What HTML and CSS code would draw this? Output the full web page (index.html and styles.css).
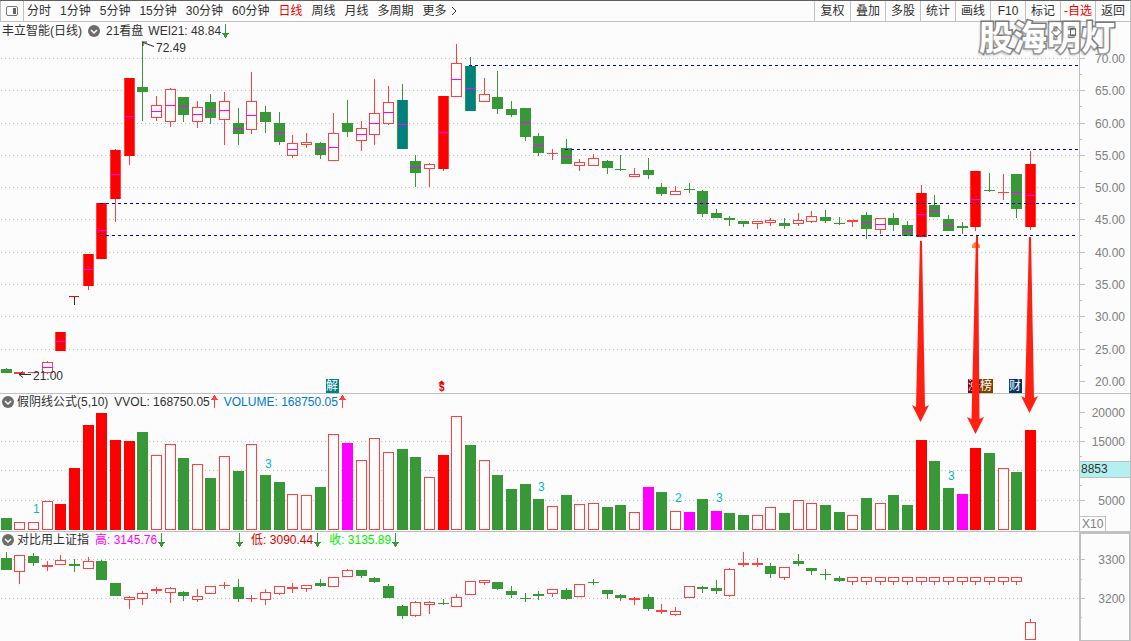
FILE: index.html
```html
<!DOCTYPE html>
<html lang="zh-CN">
<head>
<meta charset="utf-8">
<title>丰立智能 日线</title>
<link rel="stylesheet" href="styles.css">
</head>
<body>
<svg class="defs" width="0" height="0" aria-hidden="true">
  <symbol id="down" viewBox="0 0 7 14"><path d="M3 0h1v9h3v1h-1v1h-1v2h-1v1h-1v-1h-1v-2h-1v-1h-1v-1h3z" fill="#389838"/></symbol>
  <symbol id="up" viewBox="0 0 7 14"><path d="M3 0h1v1h1v2h1v1h1v1h-3v8h-1v-8h-3v-1h1v-1h1v-2h1z" fill="#ff4040"/></symbol>
  <symbol id="fold" viewBox="0 0 14 14"><circle cx="7" cy="7" r="6" fill="#6c6c6c"/><path d="M4 6l3 3 3-3" fill="none" stroke="#fff" stroke-width="1.5"/></symbol>
</svg>
<main class="app">
  <nav class="toolbar">
    <button class="dock" aria-label="侧栏"><svg width="14" height="12" viewBox="0 0 14 12"><rect x="1.500" y="1.500" width="11" height="9" rx="1.500" fill="none" stroke="#777" /><rect x="8" y="3" width="3" height="6" fill="#666"/></svg></button>
    <div class="periods">
      <button>分时</button><button>1分钟</button><button>5分钟</button><button>15分钟</button><button>30分钟</button><button>60分钟</button><button class="active">日线</button><button>周线</button><button>月线</button><button>多周期</button><button class="more">更多<svg width="6" height="10" viewBox="0 0 6 10"><path d="M1 1l4 4-4 4" fill="none" stroke="#333"/></svg></button>
    </div>
    <div class="tools">
      <button>复权</button><button>叠加</button><button>多股</button><button>统计</button><button>画线</button><button>F10</button><button>标记</button><button class="active">-自选</button><button>返回</button>
    </div>
  </nav>
  <section class="panel price">
    <div class="caption">
      <span>丰立智能(日线)</span>
      <button class="fold" aria-label="折叠"><svg width="14" height="14"><use href="#fold"/></svg></button>
      <span>21看盘</span>
      <span class="field">WEI21: 48.84<svg width="7" height="14"><use href="#down"/></svg></span>
    </div>
    <svg class="plot" id="price" viewBox="0 22 1079 371" preserveAspectRatio="xMinYMin meet"></svg>
    <svg class="axis" id="priceAxis" viewBox="1079 22 52 371"></svg>
  </section>
  <section class="panel volume">
    <div class="caption">
      <button class="fold" aria-label="折叠"><svg width="14" height="14"><use href="#fold"/></svg></button>
      <span>假阴线公式(5,10)</span>
      <span class="field">VVOL: 168750.05<svg width="7" height="14"><use href="#up"/></svg></span>
      <span class="field blue">VOLUME: 168750.05<svg width="7" height="14"><use href="#up"/></svg></span>
    </div>
    <svg class="plot" id="volume" viewBox="0 394 1079 137" preserveAspectRatio="xMinYMin meet"></svg>
    <svg class="axis" id="volumeAxis" viewBox="1079 394 52 137"></svg>
  </section>
  <section class="panel index">
    <div class="caption">
      <button class="fold" aria-label="折叠"><svg width="14" height="14"><use href="#fold"/></svg></button>
      <span>对比用上证指</span>
      <span class="field magenta">高: 3145.76<svg width="7" height="14"><use href="#down"/></svg></span>
      <span class="field white">开: 3091.94<svg width="7" height="14"><use href="#down"/></svg></span>
      <span class="field red">低: 3090.44<svg width="7" height="14"><use href="#down"/></svg></span>
      <span class="field green">收: 3135.89<svg width="7" height="14"><use href="#down"/></svg></span>
    </div>
    <svg class="plot" id="index" viewBox="0 532 1079 109" preserveAspectRatio="xMinYMin meet"></svg>
    <svg class="axis" id="indexAxis" viewBox="1079 532 52 109"></svg>
  </section>
  <svg class="arrows" viewBox="0 22 1079 419" preserveAspectRatio="xMinYMin meet" aria-hidden="true">
    <g fill="#ff2012">
      <path d="M920 241h2L925 407l4-2-8.500 17-8.500-17 4 2z"/>
      <path d="M976 236h2L979.500 419l4.500-2-8.500 17-8.500-17 4.500 2z"/>
      <path d="M1029 237h2L1034 398l4-2-8.500 17-8.500-17 4 2z"/>
    </g>
  </svg>
  <div class="watermark">股海明灯</div>
  <svg class="window-marks" width="26" height="12" viewBox="0 0 26 12" aria-hidden="true"><path d="M5.500 1l5 5-5 5-5-5zM19.500 2.500h5v7h-5z" fill="none" stroke="#606060"/></svg>
</main>
<script src="chart.js"></script>
</body>
</html>
```

FILE: styles.css
```css
* { box-sizing: border-box; }
body {
  margin: 0;
  background: #fcfcfc;
  color: #303030;
  font: 12px/18px "Liberation Sans", "Noto Sans CJK SC", sans-serif;
}
button {
  margin: 0;
  padding: 0;
  border: 0;
  background: none;
  color: inherit;
  font: inherit;
  white-space: nowrap;
}
svg { display: block; flex: none; }
.defs { position: absolute; }
.app { position: relative; overflow: hidden; }
.toolbar {
  display: flex;
  height: 22px;
  border-top: 1px solid #606060;
  border-right: 1px solid #c0c0c0;
  border-bottom: 1px solid #c0c0c0;
}
.dock {
  display: flex;
  align-items: center;
  justify-content: center;
  width: 24px;
  border-left: 1px solid #c0c0c0;
  border-right: 1px solid #c0c0c0;
}
.periods { display: flex; flex: 1; gap: 9px; padding-left: 3px; }
.more { display: flex; align-items: center; gap: 4px; }
.active { color: #f00000; }
.tools { display: flex; }
.tools button { width: 35px; border-left: 1px solid #c0c0c0; }
.tools button:first-child { width: 36px; }
.panel {
  position: relative;
  display: flex;
  border-bottom: 1px solid #c0c0c0;
}
.index { border-bottom: 0; }
.plot { flex: 1 1 0; min-width: 0; }
.axis { width: 52px; }
.price > .plot, .price > .axis { height: 371px; }
.volume > .plot, .volume > .axis { height: 137px; }
.index > .plot, .index > .axis { height: 109px; }
.caption {
  position: absolute;
  top: 0;
  left: 1px;
  display: flex;
  align-items: center;
  line-height: 16px;
  white-space: nowrap;
}
.price .caption { left: 2px; gap: 5px; line-height: 18px; }
.fold { width: 14px; margin-right: 2px; }
.price .fold { margin-right: 0; }
.field { display: flex; align-items: center; gap: 1px; margin-left: 6px; }
.price .field { margin-left: 0; }
.index .field + .field { margin-left: 8px; }
.blue { color: #0078d0; }
.magenta { color: #f0f; }
.white { color: #fff; }
.red { color: #d80000; }
.green { color: #00f000; }
.arrows {
  position: absolute;
  top: 22px;
  left: 0;
  width: calc(100% - 52px);
  height: 419px;
  pointer-events: none;
}
.watermark {
  position: absolute;
  top: 12px;
  right: 16px;
  color: #fff;
  font: bold 34px/48px "Noto Sans CJK SC", sans-serif;
  -webkit-text-stroke: 3px #787878;
  paint-order: stroke fill;
  text-shadow: -1px 2px 3px #b0b0b0;
  pointer-events: none;
}
.window-marks {
  position: absolute;
  top: 26px;
  right: 54px;
}
.shape { shape-rendering: crispEdges; }
.label { fill: #808080; }
.dark { fill: #303030; }
.count { fill: #00bcbc; }
.tag { fill: #fff; }
.sign { fill: #e80000; font-size: 10px; font-weight: bold; }
```

FILE: chart.js
```js
const NS = "http://www.w3.org/2000/svg";
const GREEN = "#389838", RED = "#ff4040", GRAY = "#c0c0c0", BG = "#fcfcfc";
const $ = id => document.getElementById(id);
const colX = i => Math.floor(1.12 + 13.658 * i);

function add(parent, name, attrs, text) {
  const el = document.createElementNS(NS, name);
  for (const k in attrs) el.setAttribute(k, attrs[k]);
  if (text !== undefined) el.textContent = text;
  parent.appendChild(el);
  return el;
}
function rect(p, x, y, w, h, fill) {
  add(p, "rect", { class: "shape", x, y, width: w, height: h, fill });
}
function hline(p, x1, x2, y, color, dash) {
  add(p, "path", { class: "shape", d: `M${x1} ${y + 0.5}H${x2}`, stroke: color, "stroke-dasharray": dash || "none" });
}
function label(p, x, y, text, cls, anchor) {
  add(p, "text", { x, y: y + 4, class: cls, "text-anchor": anchor || "start" }, text);
}
function hollow(p, x, y, h) {
  rect(p, x, y, 11, h, RED);
  if (h > 2) rect(p, x + 1, y + 1, 9, h - 2, BG);
}
// high, body top, body bottom, low, kind, average
function candle(p, i, [hi, top, bot, lo, kind, avg]) {
  const x = colX(i), h = bot - top;
  const up = kind === "r" || kind === "R";
  rect(p, x + 5, hi, 1, lo - hi, kind === "k" ? "#303030" : up ? RED : GREEN);
  if (kind === "r") hollow(p, x, top, h);
  else if (kind === "k") rect(p, x, top, 10, h, "#f00");
  else rect(p, x, top, 11, h, up ? RED : GREEN);
  if (kind === "R") rect(p, x + 1, top, 9, h, "#f00");
  if (kind === "c") rect(p, x + 1, top, 9, h, "#008080");
  if (avg) rect(p, x, avg, 11, 1, "#f0f");
}

const prices = [
  [368,369,373,373,"g"],[372,372,374,374,"r"],[372,372,373,373,"r"],[361,362,373,374,"r",367],
  [332,332,351,351,"R",341],[296,296,297,305,"k"],[254,254,286,290,"R",269],[203,203,259,259,"R",230],
  [149,150,199,222,"R",174],[78,78,156,165,"R",116],[41,87,92,121,"g"],[96,105,118,121,"r",111],
  [88,89,122,127,"r",105],[97,97,115,122,"g",106],[101,107,122,128,"r",114],[94,102,118,124,"g",110],
  [92,101,120,145,"r",110],[108,123,134,145,"g",128],[72,101,130,134,"r",115],[106,112,122,133,"g"],
  [112,123,142,145,"g",132],[135,143,156,158,"r",149],[133,142,145,148,"r"],[142,143,155,159,"g",149],
  [113,133,161,161,"r",147],[100,123,132,137,"g"],[121,128,141,151,"r",134],[79,113,135,145,"r",123],
  [86,102,124,125,"r",112],[84,100,149,149,"c",124],[155,161,173,187,"g",167],[163,164,169,187,"r"],
  [96,96,169,171,"R",132],[44,63,97,97,"r",79],[57,66,111,111,"c",88],[78,94,102,102,"r"],
  [71,97,109,114,"g"],[101,109,115,117,"g"],[108,108,137,141,"g",122],[133,136,153,156,"g",145],
  [149,153,154,160,"r"],[139,148,164,164,"g",156],[159,162,166,171,"r"],[154,158,166,166,"r"],
  [160,161,168,174,"g"],[155,169,170,171,"g"],[168,174,177,177,"r"],[158,170,175,179,"g"],
  [183,187,194,196,"g"],[186,191,195,195,"r"],[183,189,190,193,"g"],[190,191,214,217,"g",203],
  [209,213,218,218,"g"],[216,218,220,226,"g"],[221,221,224,227,"g"],[221,221,224,229,"r"],
  [218,220,223,226,"r"],[218,223,226,229,"g"],[213,220,224,226,"r"],[211,216,222,223,"r"],
  [210,217,221,223,"g"],[217,223,224,225,"g"],[220,220,222,227,"r"],[212,215,229,239,"g",222],
  [218,218,230,234,"r",224],[213,218,225,231,"g"],[221,225,236,236,"g",230],[185,193,237,237,"R",214],
  [195,205,217,217,"g",211],[215,219,231,231,"g",225],[222,226,228,234,"g"],[171,171,227,231,"R",199],
  [173,190,191,192,"g"],[174,192,193,200,"r"],[174,174,209,218,"g",192],[151,164,227,230,"R",195]
];
const volumes = ("518g 522r 522r 501r 504R 468R 425R 413R 440R 441R 432g 455r 444r 458g 464r 478g 456r 471g 444r " +
  "475g 482g 494r 495r 487g 434r 443m 460r 438r 452r 449g 457g 477r 455R 416r 445g 460r 475g 489g 484g 499g " +
  "506r 495g 504r 503r 507g 505g 512r 487m 492g 511r 512m 499g 511m 513g 515g 515r 507r 513g 500r 503r 505g " +
  "512g 515r 498g 503r 495g 505g 440R 461g 488g 494m 448R 453g 468r 472g 430R").split(" ");
const flat = Array(13).fill([577,577,582,585,"r"]);
const indexes = [
  [552,558,570,570,"g"],[555,555,572,584,"r"],[553,556,563,566,"g"],[561,565,567,571,"r"],
  [555,560,565,565,"r"],[559,564,566,572,"g"],[557,561,569,569,"r"],[560,561,580,580,"g"],
  [583,583,596,596,"g"],[596,597,600,609,"r"],[591,593,599,605,"r"],[587,589,591,594,"r"],
  [587,588,593,603,"r"],[591,592,596,601,"g"],[589,596,600,602,"r"],[586,586,594,594,"r"],
  [582,585,586,589,"r"],[579,587,599,602,"g"],[595,598,599,602,"r"],[589,592,600,605,"r"],
  [586,586,594,595,"r"],[583,587,589,593,"r"],[585,585,589,592,"r"],[579,583,586,587,"g"],
  [577,577,587,587,"r"],[569,570,577,577,"r"],[570,570,576,578,"g"],[577,578,582,583,"g"],
  [584,586,598,598,"g"],[605,606,616,619,"g"],[601,602,616,617,"r"],[601,602,605,614,"r"],
  [599,603,604,605,"g"],[594,597,607,607,"r"],[581,581,595,595,"r"],[580,580,583,585,"r"],
  [582,582,589,590,"g"],[586,591,595,598,"g"],[593,598,599,602,"g"],[591,594,596,600,"g"],
  [589,589,594,597,"r"],[588,590,599,600,"g"],[584,584,597,597,"r"],[579,582,583,585,"g"],
  [590,590,594,599,"g"],[594,595,598,601,"g"],[597,598,600,605,"r"],[594,597,609,611,"g"],
  [604,610,612,614,"r"],[607,611,615,616,"r"],[586,586,598,598,"r"],[586,587,589,593,"g"],
  [580,588,591,594,"g"],[568,569,596,597,"r"],[552,563,565,567,"r"],[558,563,565,567,"r"],
  [563,566,574,578,"g"],[567,567,578,580,"r"],[554,561,564,566,"g"],[568,568,571,575,"g"],
  [569,574,575,580,"g"],[576,578,581,582,"g"],...flat,[619,622,640,640,"r"]
];

const price = $("price");
const priceRows = [58, 90, 123, 155, 187, 219, 252, 284, 316, 349];
priceRows.forEach(y => hline(price, 1, 1079, y, GRAY, "1 3"));
prices.forEach((c, i) => candle(price, i, c));
[[469, 65], [565, 149], [100, 203], [100, 235]].forEach(([x, y]) => hline(price, x, 1078, y, "#0000c8", "3 3"));
label(price, 156, 48, "72.49", "dark");
label(price, 33, 376, "21.00", "dark");
add(price, "path", { d: "M154 46.500l-11-4M143 46v-4h4M31 374.500H19M23 371.500l-4 3 4 3", fill: "none", stroke: "#303030" });
[[326, "解", "#008080"], [968, "涨", "#880000"], [980, "榜", "#804000"], [1009, "财", "#003468"]].forEach(([x, t, c]) => {
  rect(price, x, 379, 13, 14, c);
  label(price, x, 386, t, "tag");
});
label(price, 439, 387, "$", "sign");
add(price, "path", { d: "M438 383.500l3.500-3 3.500 3z", fill: "#e80000" });
add(price, "path", { d: "M972 248v-3l3-3h2l3 3v3z", fill: "#ff8040" });

const volume = $("volume");
[441, 470, 500].forEach(y => hline(volume, 1, 1079, y, GRAY, "1 3"));
volumes.forEach((v, i) => {
  const y = parseInt(v, 10), kind = v.slice(-1), x = colX(i);
  if (kind === "r") hollow(volume, x, y, 530 - y);
  else rect(volume, x, y, 11, 530 - y, { g: GREEN, R: "#f00", m: "#f0f" }[kind]);
});
[[33, 509, 1], [265, 464, 3], [538, 487, 3], [675, 498, 2], [716, 498, 3], [948, 476, 3]].forEach(([x, y, t]) => label(volume, x, y, t, "count"));

const index = $("index");
[559, 598].forEach(y => hline(index, 1, 1079, y, GRAY, "1 3"));
indexes.forEach((c, i) => candle(index, i, c));

const pa = $("priceAxis");
rect(pa, 1079, 22, 1, 371, GRAY);
rect(pa, 1130, 22, 1, 371, GRAY);
priceRows.concat(381).forEach((y, i) => {
  rect(pa, 1080, y, 5, 1, GRAY);
  if (i < 10) rect(pa, 1080, y + 16, 2, 1, GRAY);
  label(pa, 1125, y + 1, (70 - i * 5).toFixed(2), "label", "end");
});
const va = $("volumeAxis");
rect(va, 1079, 394, 1, 137, GRAY);
rect(va, 1130, 394, 1, 137, GRAY);
[[412, "20000"], [441, "15000"], [500, "5000"]].forEach(([y, t]) => {
  rect(va, 1080, y, 5, 1, GRAY);
  label(va, 1125, y + 1, t, "label", "end");
});
[427, 456, 485].forEach(y => rect(va, 1080, y, 2, 1, GRAY));
rect(va, 1080, 461, 50, 17, GRAY);
rect(va, 1080, 462, 50, 15, "#b4f0f0");
label(va, 1081, 469, "8853", "dark");
rect(va, 1080, 516, 26, 15, GRAY);
rect(va, 1080, 517, 25, 14, BG);
label(va, 1082, 524, "X10", "label");
const ia = $("indexAxis");
rect(ia, 1079, 532, 52, 109, GRAY);
rect(ia, 1081, 534, 48, 106, BG);
[[559, "3300"], [598, "3200"]].forEach(([y, t]) => {
  rect(ia, 1081, y, 4, 1, GRAY);
  label(ia, 1125, y + 1, t, "label", "end");
});
[579, 617].forEach(y => rect(ia, 1081, y, 1, 1, GRAY));
```
